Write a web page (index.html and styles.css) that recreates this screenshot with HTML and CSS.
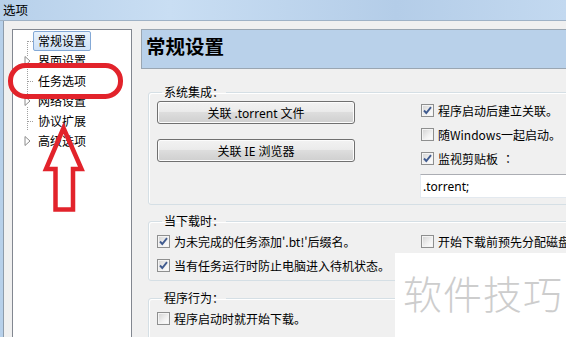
FILE: index.html
```html
<!DOCTYPE html>
<html lang="zh-CN">
<head>
  <meta charset="UTF-8" />
  <meta name="viewport" content="width=device-width, initial-scale=1.0"/>
  <title>选项</title>
  <link rel="stylesheet" href="styles.css">
</head>
<body>
  <div class="titlebar">选项</div>

  <div class="client">
    <ul class="tree">
      <li class="node first"><span class="twig"></span><span class="label selected">常规设置</span></li>
      <li class="node"><span class="twig expander"><svg width="7" height="10" viewBox="0 0 7 10"><polygon points="1,0.5 6,5 1,9.5" fill="#fff" stroke="#8c8c8c"/></svg></span><span class="label">界面设置</span></li>
      <li class="node"><span class="twig"></span><span class="label">任务选项</span></li>
      <li class="node"><span class="twig expander"><svg width="7" height="10" viewBox="0 0 7 10"><polygon points="1,0.5 6,5 1,9.5" fill="#fff" stroke="#8c8c8c"/></svg></span><span class="label">网络设置</span></li>
      <li class="node"><span class="twig"></span><span class="label">协议扩展</span></li>
      <li class="node last"><span class="twig expander"><svg width="7" height="10" viewBox="0 0 7 10"><polygon points="1,0.5 6,5 1,9.5" fill="#fff" stroke="#8c8c8c"/></svg></span><span class="label">高级选项</span></li>
    </ul>

    <div class="main">
      <div class="page-header">常规设置</div>

      <fieldset class="group group-system">
        <legend>系统集成<span class="colon">：</span></legend>
        <div class="group-grid">
          <div class="buttons">
            <button class="btn">关联 .torrent 文件</button>
            <button class="btn">关联 IE 浏览器</button>
          </div>
          <div class="options">
            <label class="check"><span class="cb checked"></span>程序启动后建立关联。</label>
            <label class="check"><span class="cb"></span>随Windows一起启动。</label>
            <label class="check"><span class="cb checked"></span>监视剪贴板<span class="colon">：</span></label>
            <input class="textbox" type="text" value=".torrent;" />
          </div>
        </div>
      </fieldset>

      <fieldset class="group group-download">
        <legend>当下载时<span class="colon">：</span></legend>
        <div class="group-grid">
          <div class="options">
            <label class="check"><span class="cb checked"></span>为未完成的任务添加'.bt!'后缀名。</label>
            <label class="check"><span class="cb checked"></span>当有任务运行时防止电脑进入待机状态。</label>
          </div>
          <div class="options">
            <label class="check"><span class="cb"></span>开始下载前预先分配磁盘</label>
          </div>
        </div>
      </fieldset>

      <fieldset class="group group-behavior">
        <legend>程序行为<span class="colon">：</span></legend>
        <div class="options">
          <label class="check"><span class="cb"></span>程序启动时就开始下载。</label>
        </div>
      </fieldset>
    </div>
  </div>

  <!-- annotations drawn over the screenshot -->
  <svg class="marks" width="566" height="337" viewBox="0 0 566 337">
    <rect x="10.5" y="65.5" width="110" height="31" rx="15" ry="15" fill="none" stroke="#e2232b" stroke-width="5"/>
    <polygon points="63.5,128 81.5,169 73,169 73,209.5 55.5,209.5 55.5,169 46,169" fill="none" stroke="#e2232b" stroke-width="4.5" stroke-linejoin="miter"/>
  </svg>

  <div class="watermark">软件技巧</div>
</body>
</html>
```

FILE: styles.css
```css
* {
  box-sizing: border-box;
}

body {
  margin: 0;
  width: 566px;
  height: 337px;
  overflow: hidden;
  position: relative;
  background: linear-gradient(to right, #b7d0ea, #c9def3 30%, #b4cde8 70%, #c3d9f0);
  font-family: "Noto Sans", "Noto Sans CJK SC", sans-serif;
  font-size: 12px;
  color: #000;
}

.titlebar {
  height: 21px;
  padding: 2px 0 0 3px;
  line-height: 15px;
  font-size: 12.5px;
  font-family: "Noto Sans CJK SC", sans-serif;
  border-bottom: 1px solid #9fb2c6;
}

.client {
  display: flex;
  align-items: flex-start;
  margin-left: 3px;
  height: 320px;
  overflow: hidden;
  padding: 8px 0 0 8px;
  background-color: #f0f0f0;
  border-left: 1px solid #8e9cab;
}

/* tree */

.tree {
  list-style: none;
  margin: 0;
  padding: 1px 0 0 8px;
  width: 120px;
  height: 320px;
  flex-shrink: 0;
  background-color: #fff;
  border: 1px solid #828790;
}

.node {
  display: flex;
  align-items: center;
  height: 20px;
}

.twig {
  width: 12px;
  height: 20px;
  flex-shrink: 0;
  display: flex;
  align-items: center;
  background:
    repeating-linear-gradient(to bottom, #a0a0a0 0 1px, transparent 1px 2px) 6px 0 / 1px 100% no-repeat,
    repeating-linear-gradient(to right, #a0a0a0 0 1px, transparent 1px 2px) 7px 10px / 6px 1px no-repeat;
}

.first .twig {
  background:
    repeating-linear-gradient(to bottom, #a0a0a0 0 1px, transparent 1px 2px) 6px 10px / 1px 10px no-repeat,
    repeating-linear-gradient(to right, #a0a0a0 0 1px, transparent 1px 2px) 7px 10px / 6px 1px no-repeat;
}

.twig.expander {
  padding-left: 3px;
  background:
    repeating-linear-gradient(to bottom, #a0a0a0 0 1px, transparent 1px 2px) 6px 0 / 1px 100% no-repeat;
}

.twig.expander svg {
  background-color: #fff;
}

.last .twig.expander {
  background: none;
}

.label {
  height: 20px;
  padding: 0 4px;
  line-height: 18px;
  border: 1px solid transparent;
  border-radius: 2px;
  font-family: "Noto Sans CJK SC", sans-serif;
  white-space: nowrap;
}

.label.selected {
  background: linear-gradient(to bottom, #e8f2fc, #cfe2f7);
  border-color: #84a9d6;
}

/* right side */

.main {
  margin-left: 9px;
  width: 450px;
  flex-shrink: 0;
  display: flex;
  flex-direction: column;
}

.page-header {
  height: 40px;
  padding: 5px 0 0 4px;
  line-height: 22px;
  font-size: 19.5px;
  font-weight: bold;
  font-family: "Noto Sans CJK SC", sans-serif;
  background-color: #b9d1ea;
  border: 1px solid #9aa6b2;
  border-right: none;
}

.group {
  margin: 0 0 0 7px;
  padding: 0 0 6px 8px;
  border: 1px solid #d5dfe5;
  border-radius: 3px;
  box-shadow: inset 1px 1px 0 #fff;
  min-width: 0;
}

.group legend {
  padding: 0 2px;
  margin-left: 5px;
  line-height: 12px;
  font-family: "Noto Sans CJK SC", sans-serif;
}

.colon {
  font-family: "Noto Sans CJK TC", sans-serif;
}

.group-system {
  margin-top: 17px;
}

.group-download {
  margin-top: 10px;
  padding-top: 2px;
  padding-bottom: 3px;
}

.group-behavior {
  margin-top: 11px;
  padding-top: 2px;
  height: 60px;
}

.group-grid {
  display: grid;
  grid-template-columns: 198px 1fr;
  column-gap: 66px;
}

.buttons {
  display: flex;
  flex-direction: column;
  gap: 15px;
  padding-top: 3px;
}

.btn {
  height: 23px;
  padding: 0;
  font-family: "Noto Sans", "Noto Sans CJK SC", sans-serif;
  font-size: 12px;
  color: #000;
  background: linear-gradient(to bottom, #f2f2f2 0%, #ebebeb 45%, #dddddd 50%, #cfcfcf 100%);
  border: 1px solid #707070;
  border-radius: 3px;
  box-shadow: inset 0 0 0 1px #fcfcfc;
}

.options {
  display: flex;
  flex-direction: column;
}

.check {
  display: flex;
  align-items: center;
  gap: 4px;
  height: 24px;
  white-space: nowrap;
  font-family: "Noto Sans CJK SC", sans-serif;
}

.cb {
  width: 13px;
  height: 13px;
  flex-shrink: 0;
  border: 1px solid #8e8f8f;
  background: linear-gradient(135deg, #d2d2d2, #f2f2f2 60%, #ffffff);
  box-shadow: inset 0 0 0 1px #f4f4f4;
}

.cb.checked {
  background:
    url("data:image/svg+xml,%3Csvg xmlns='http://www.w3.org/2000/svg' width='11' height='11' viewBox='0 0 11 11'%3E%3Cpath d='M2 5.5 L4.3 8 L9 2.2' fill='none' stroke='%23405b8f' stroke-width='1.9'/%3E%3C/svg%3E") center / 11px 11px no-repeat,
    linear-gradient(135deg, #d2d2d2, #f2f2f2 60%, #ffffff);
}

.textbox {
  margin-top: 4px;
  margin-left: -1px;
  height: 24px;
  width: 160px;
  padding: 0 2px;
  font-family: "Noto Sans", sans-serif;
  font-size: 12px;
  background-color: #fff;
  border: 1px solid #e3e9ef;
  border-top-color: #abadb3;
  outline: none;
}

/* overlays */

.marks {
  position: absolute;
  left: 0;
  top: 0;
}

.watermark {
  position: absolute;
  left: 395px;
  top: 253px;
  width: 171px;
  height: 84px;
  padding: 15px 0 0 8px;
  background-color: #fff;
  color: #cdcdcd;
  font-family: "Noto Sans CJK SC", sans-serif;
  font-weight: 300;
  font-size: 39px;
  line-height: 48px;
  letter-spacing: 1px;
  white-space: nowrap;
}
```
